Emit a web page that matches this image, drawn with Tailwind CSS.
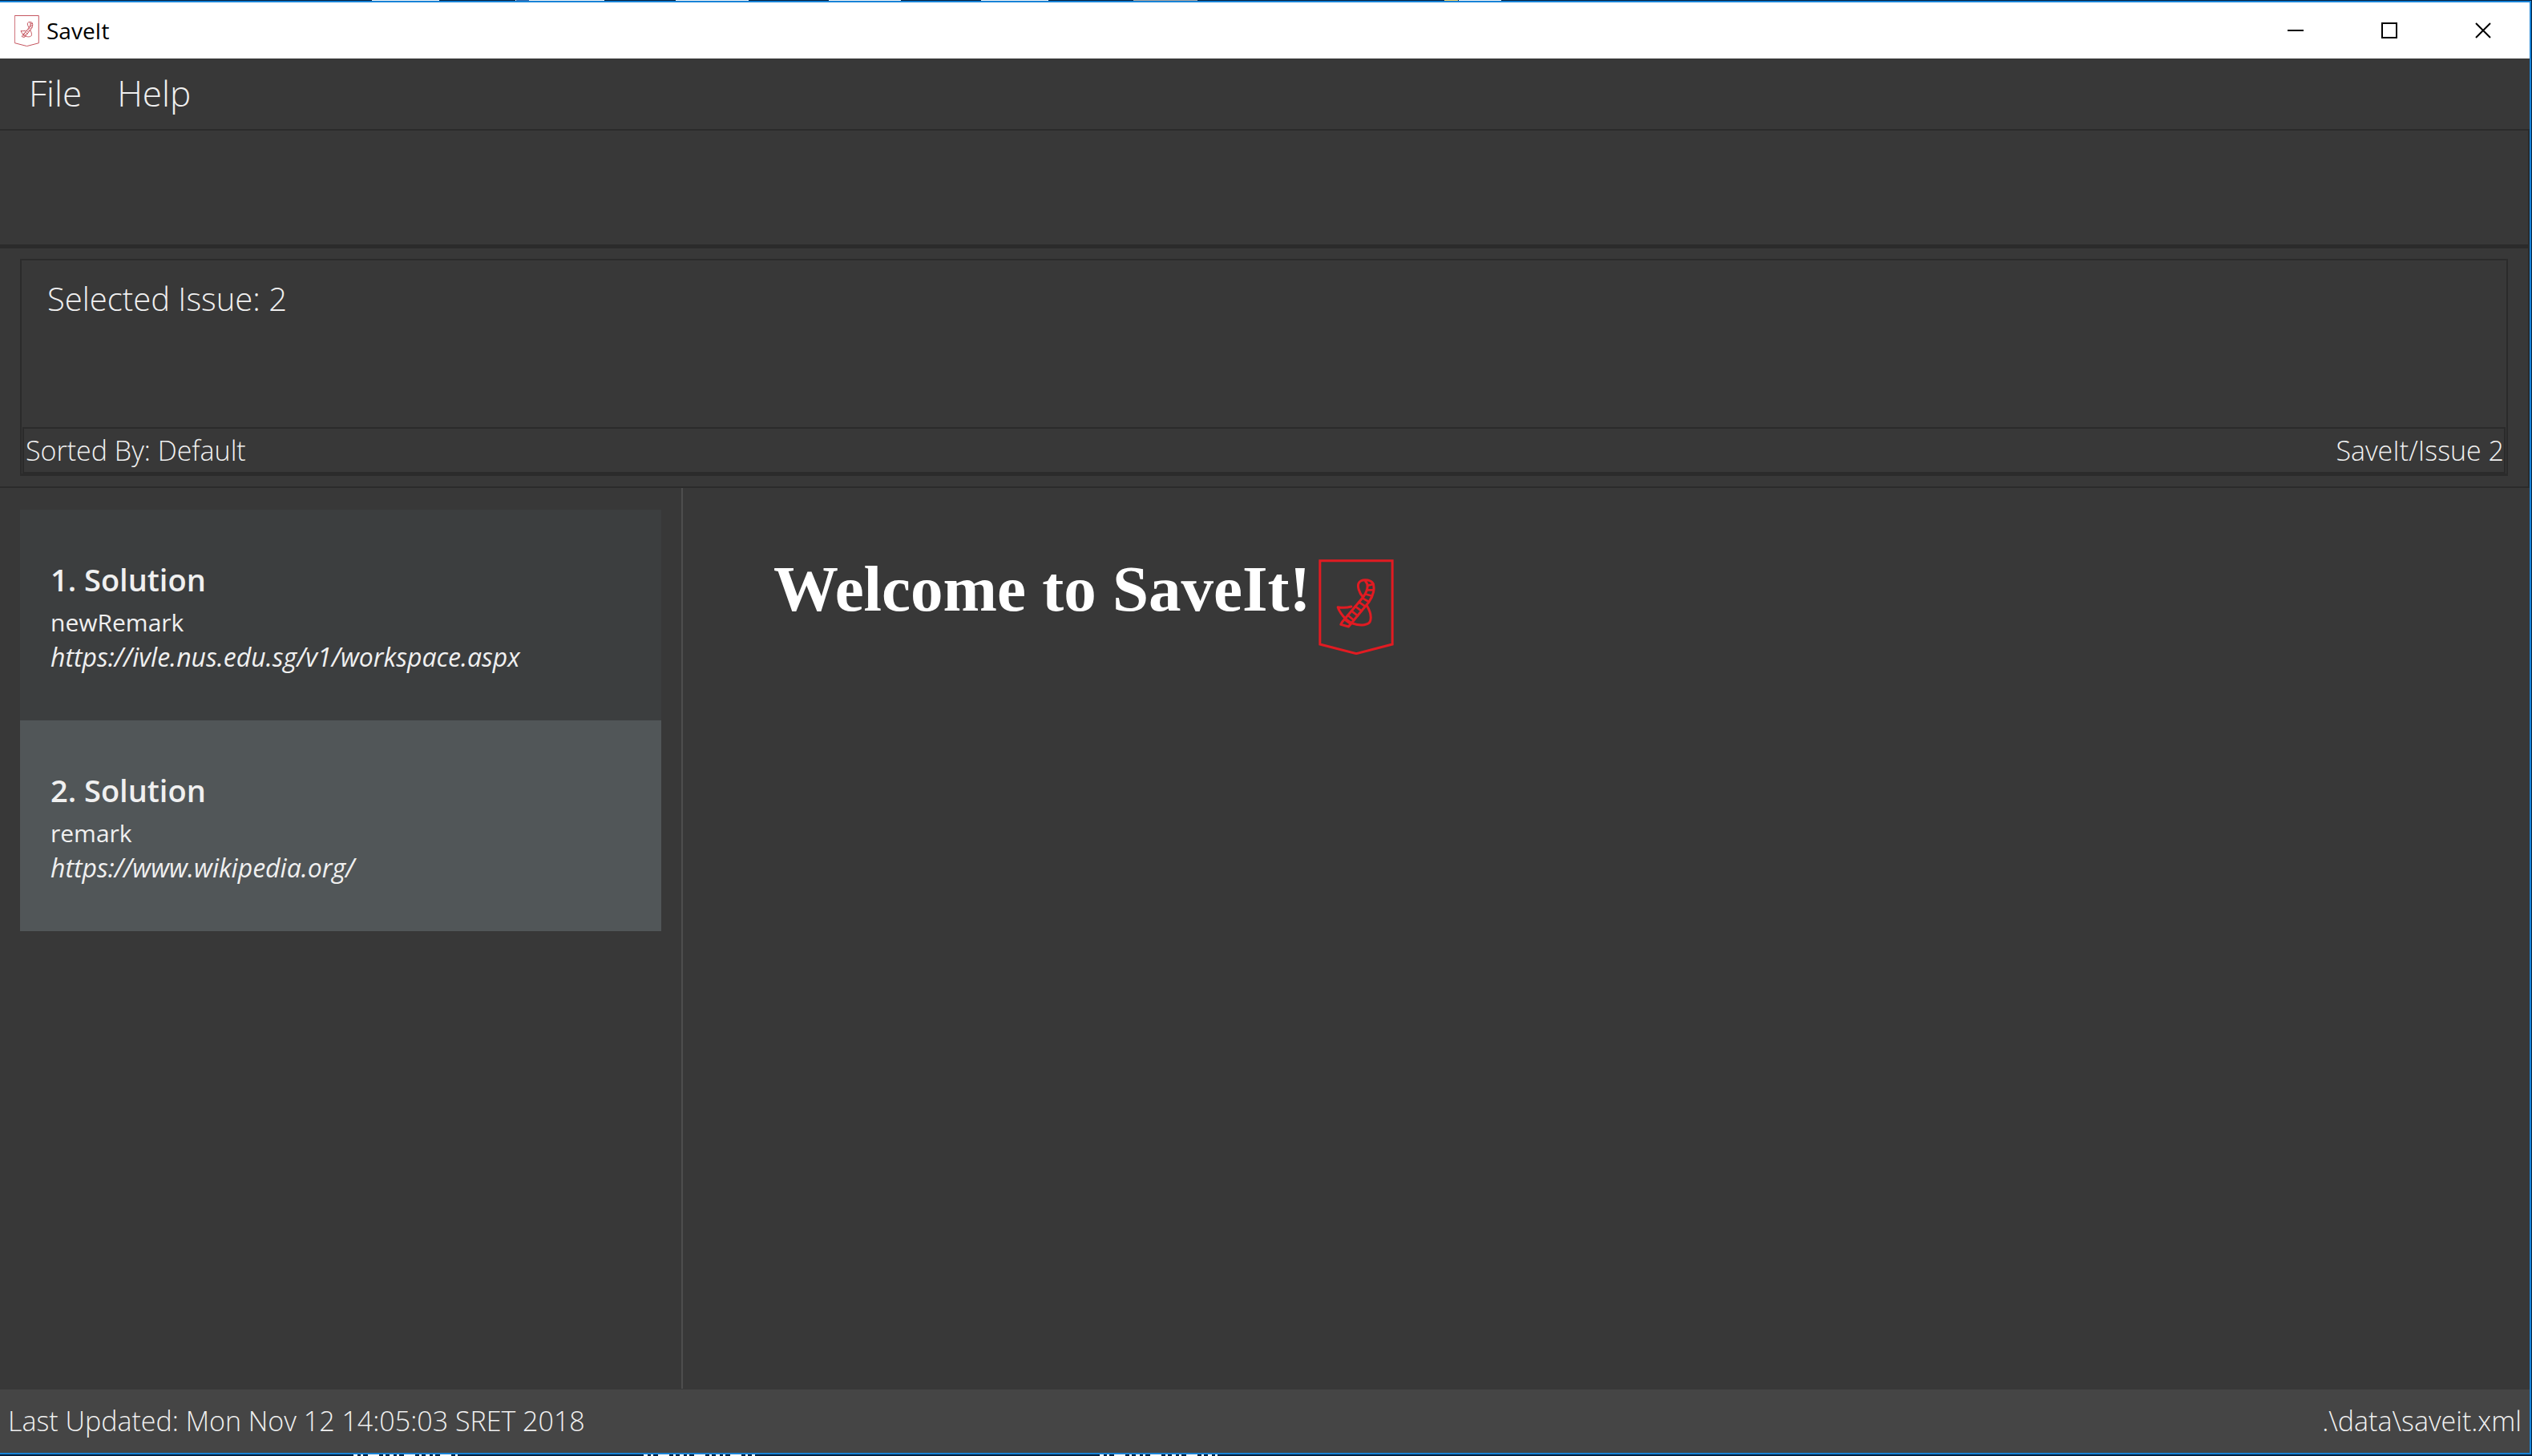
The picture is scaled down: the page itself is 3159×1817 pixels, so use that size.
<!DOCTYPE html>
<html lang="en">
<head>
<meta charset="utf-8">
<title>SaveIt</title>
<script src="https://cdn.jsdelivr.net/npm/@tailwindcss/browser@4"></script>
</head>
<body class="flex min-h-screen flex-col bg-[#04203f] font-['Open_Sans',sans-serif] text-[#f0f0f0]">

<!-- Shared logo artwork -->
<svg class="hidden" aria-hidden="true">
  <symbol id="logo" viewBox="134 115 281 357">
    <g fill="none" stroke="currentColor" stroke-linejoin="round" stroke-linecap="round">
      <path stroke-width="9" stroke-linejoin="miter" d="M139 120H410V433L275 468L139 433Z"/>
      <path stroke-width="9" d="M300 256C285 240 278 215 284 204C292 188 325 188 337 204C345 222 340 250 322 275L246 367L217 359L222 350L296 262C318 236 322 210 310 198"/>
      <path stroke-width="9" d="M256 292Q232 299 206 294C213 315 235 345 262 355C290 366 325 362 328 343C332 325 325 305 314 288"/>
      <path stroke-width="8" d="M319 213L339 208M316 230L340 230M308 245L334 252M298 260L322 274M285 275L308 291M271 291L294 308M257 308L280 326M243 324L266 343M230 340L254 357"/>
    </g>
  </symbol>
</svg>

<!-- Sliver of the desktop above the window -->
<svg class="block h-px w-full shrink-0" viewBox="0 0 3159 1" preserveAspectRatio="none" aria-hidden="true">
  <g fill="#f1f3f5">
    <rect x="464" width="84" height="1"/><rect x="643" width="111" height="1"/><rect x="843" width="91" height="1"/><rect x="1034" width="90" height="1"/><rect x="1224" width="84" height="1"/><rect x="1820" width="53" height="1"/>
  </g>
  <rect x="1414" width="80" height="1" fill="#a9a4a0"/><rect x="1802" width="17" height="1" fill="#f0cf68"/><rect x="644" width="16" height="1" fill="#3568a8"/>
</svg>

<div class="mr-px flex flex-1 flex-col border-y-2 border-r-2 border-[#1883d7] bg-[#383838]">

  <header class="flex h-[70px] items-center bg-white text-black">
    <svg class="ml-[18px] h-[39px] w-[31px] text-[#c4525c]" aria-hidden="true"><use href="#logo"/></svg>
    <h1 class="ml-[9px] flex-1 text-[28px] leading-[70px]">SaveIt</h1>
    <button aria-label="Minimize" class="flex h-full w-[117px] items-center justify-center"><svg class="size-5" viewBox="0 0 20 20"><path d="M0 10H20" stroke="#000" stroke-width="2"/></svg></button>
    <button aria-label="Maximize" class="flex h-full w-[117px] items-center justify-center"><svg class="size-5" viewBox="0 0 20 20"><path d="M1 1H19V19H1Z" fill="none" stroke="#000" stroke-width="2"/></svg></button>
    <button aria-label="Close" class="flex h-full w-[117px] items-center justify-center"><svg class="size-5" viewBox="0 0 20 20"><path d="M1 1L19 19M19 1L1 19" stroke="#000" stroke-width="2"/></svg></button>
  </header>

  <nav class="flex h-[88px] items-center gap-11 px-9 pb-0.5 text-[44px] font-light">
    <button>File</button>
    <button>Help</button>
  </nav>

  <section class="border-t-2 border-r-2 border-b-3 border-[#2b2b2b]">
    <input type="text" aria-label="Command" class="block h-[142px] w-full bg-transparent px-8 text-[40px] font-light outline-none">
  </section>

  <section class="border-t-2 border-r-2 border-b-2 border-[#2b2b2b] px-[25px] pt-[13px] pb-[13px]">
    <div class="border-2 border-b-3 border-[#2b2b2b]">
      <textarea readonly aria-label="Result" class="block h-[208px] w-full resize-none bg-transparent px-8 pt-[21px] text-[40px] leading-[54px] font-light outline-none">Selected Issue: 2</textarea>
      <div class="mx-px flex justify-between border-2 border-[#2b2b2b] pl-0.5 text-[34px] leading-[54px] font-light">
        <span>Sorted By: Default</span>
        <span>SaveIt/Issue 2</span>
      </div>
    </div>
  </section>

  <main class="flex flex-1 pb-px">
    <aside class="w-[27%] border-r-2 border-[#4d4d4d] px-[25px] pt-[27px]">
      <ul>
        <li class="bg-[#3c3e3f] px-[38px] pt-[55px] pb-[58px]">
          <h2 class="text-[38px] leading-[64px] font-semibold">1. Solution</h2>
          <p class="text-[30px] leading-[44px]">newRemark</p>
          <a href="https://ivle.nus.edu.sg/v1/workspace.aspx" class="block text-[32px] leading-[42px] italic">https://ivle.nus.edu.sg/v1/workspace.aspx</a>
        </li>
        <li class="bg-[#515658] px-[38px] pt-[55px] pb-[58px]">
          <h2 class="text-[38px] leading-[64px] font-semibold">2. Solution</h2>
          <p class="text-[30px] leading-[44px]">remark</p>
          <a href="https://www.wikipedia.org/" class="block text-[32px] leading-[42px] italic">https://www.wikipedia.org/</a>
        </li>
      </ul>
    </aside>
    <article class="flex-1 px-[113px] pt-20">
      <div class="flex items-start gap-[10px] text-white">
        <h2 class="font-['Liberation_Serif',serif] text-[81px] leading-[92px] font-bold">Welcome to SaveIt!</h2>
        <svg class="mt-[9px] h-[119px] w-[94px] text-[#e11b22]" role="img" aria-label="SaveIt logo"><use href="#logo"/></svg>
      </div>
    </article>
  </main>

  <footer class="flex justify-between bg-[#454545] px-[10px] text-[34px] leading-[79px] font-light">
    <span>Last Updated: Mon Nov 12 14:05:03 SRET 2018</span>
    <span>.\data\saveit.xml</span>
  </footer>
</div>

<!-- Sliver of desktop icon captions below the window -->
<svg class="block h-0.5 w-full shrink-0" viewBox="0 0 3159 2" preserveAspectRatio="none" aria-hidden="true">
  <path d="M441 1H575M803 1H942M1372 1H1523" stroke="#fff" stroke-width="2" stroke-dasharray="5 4 3 6 14 5 3 5"/>
</svg>
</body>
</html>
